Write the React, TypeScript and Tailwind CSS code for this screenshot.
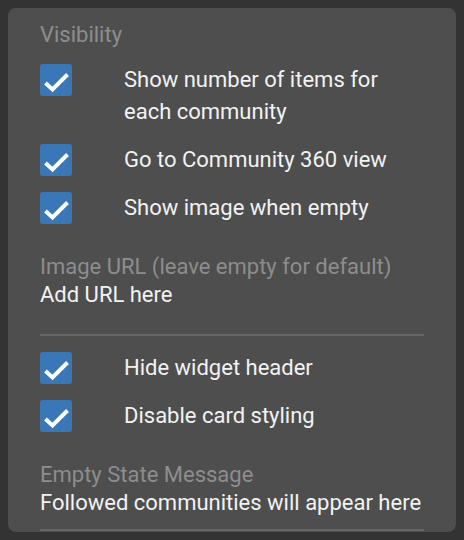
const Check = () => (
  <span className="flex h-8 w-8 shrink-0 rounded-[3px] bg-[#3a77b7]">
    <svg viewBox="0 0 32 32" className="h-8 w-8" fill="none" stroke="#fff" strokeWidth="4" strokeLinecap="butt" strokeLinejoin="miter">
      <path d="M5.5 19l7 6.5L27.5 10.5" />
    </svg>
  </span>
)

const Row = ({label}: {label: string}) => (
  <label className="flex items-start py-2 gap-[52px]">
    <Check />
    <span className="text-[22px] leading-8 text-[#f2f2f2]">{label}</span>
  </label>
)

const Field = ({label, value}: {label: string; value: string}) => (
  <div className="flex flex-col">
    <span className="text-[22px] leading-7 text-[#8d8d8d]">{label}</span>
    <span className="text-[22px] leading-7 text-[#f2f2f2]">{value}</span>
  </div>
)

export default function App() {
  return (
    <div className="min-h-[540px] bg-[#333333] p-2" style={{fontFamily: "Roboto, 'Liberation Sans', sans-serif"}}>
      <div className="rounded-lg bg-[#4e4e4e] px-8 pt-[13px] pb-[1px]">
        <p className="text-[22px] leading-7 text-[#8d8d8d]">Visibility</p>
        <div className="mt-[7px] flex flex-col">
          <Row label="Show number of items for each community" />
          <Row label="Go to Community 360 view" />
          <Row label="Show image when empty" />
        </div>
        <div className="mt-[21px]">
          <Field label="Image URL (leave empty for default)" value="Add URL here" />
        </div>
        <div className="mt-[25px] h-[2px] bg-[#666666]" />
        <div className="mt-2 flex flex-col">
          <Row label="Hide widget header" />
          <Row label="Disable card styling" />
        </div>
        <div className="mt-[21px]">
          <Field label="Empty State Message" value="Followed communities will appear here" />
        </div>
        <div className="mt-3 h-[2px] bg-[#666666]" />
      </div>
    </div>
  )
}
